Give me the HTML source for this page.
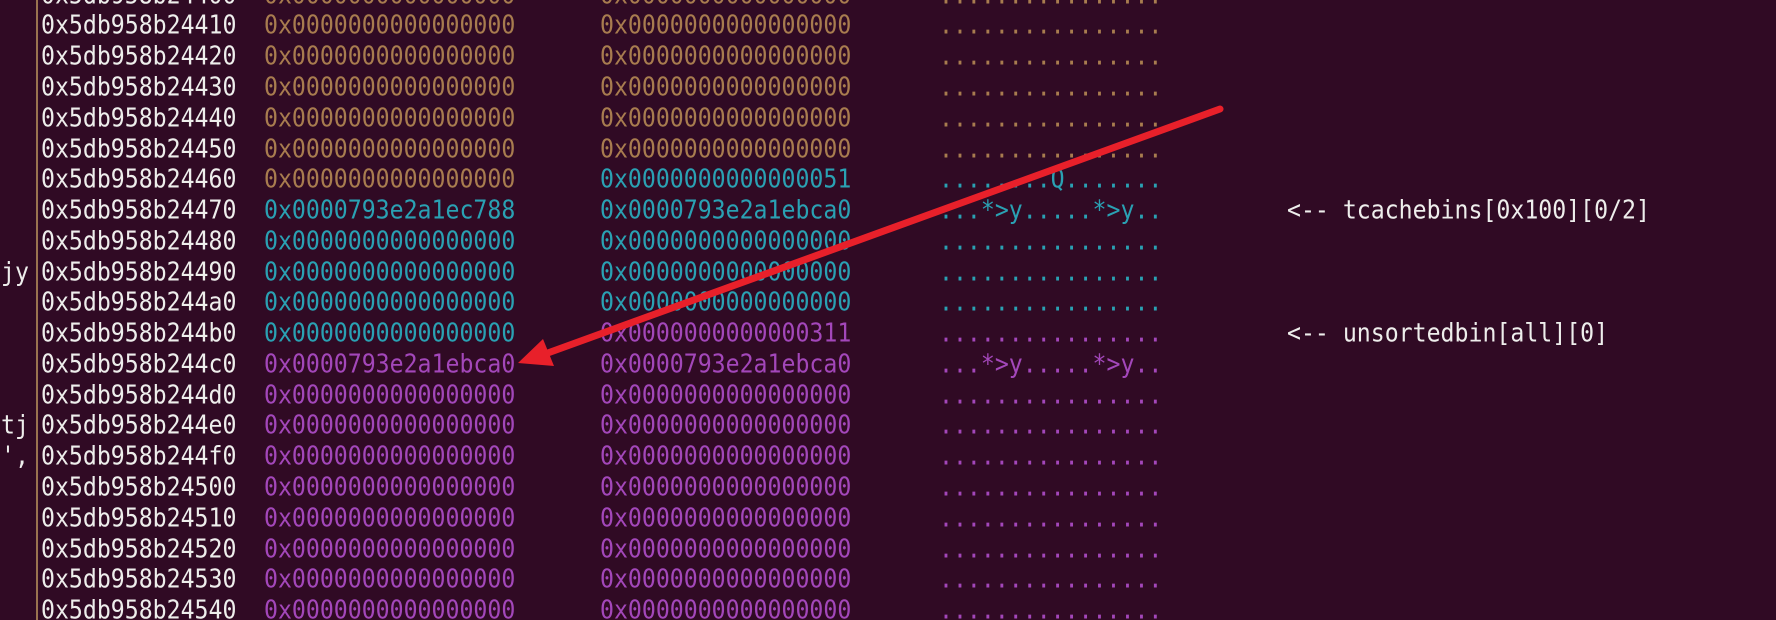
<!DOCTYPE html>
<html><head><meta charset="utf-8"><style>
html,body{margin:0;padding:0;width:1776px;height:620px;overflow:hidden;background:#300a24;}
body{position:relative;font-family:"DejaVu Sans Mono","Liberation Mono",monospace;font-size:23.2px;}
.r{position:absolute;left:0;height:30.8px;line-height:30.8px;white-space:pre;}
.r span{position:absolute;top:0;transform:scaleY(1.1);transform-origin:50% 50%;}
.w{color:#eeeeec}.o{color:#a87c4f}.c{color:#2aa1b3}.m{color:#a347ba}
.vl{position:absolute;left:36px;top:0;width:2px;height:620px;background:#9a7350;}
</style></head><body>
<div class="vl"></div>
<div id="rows"></div>
<script>
var Z="0x0000000000000000",D="................";
var rows=[
["24400","o",Z,"o",Z,"o",D,""],
["24410","o",Z,"o",Z,"o",D,""],
["24420","o",Z,"o",Z,"o",D,""],
["24430","o",Z,"o",Z,"o",D,""],
["24440","o",Z,"o",Z,"o",D,""],
["24450","o",Z,"o",Z,"o",D,""],
["24460","o",Z,"c","0x0000000000000051","c","........Q.......",""],
["24470","c","0x0000793e2a1ec788","c","0x0000793e2a1ebca0","c","...*>y.....*>y..","<-- tcachebins[0x100][0/2]"],
["24480","c",Z,"c",Z,"c",D,""],
["24490","c",Z,"c",Z,"c",D,""],
["244a0","c",Z,"c",Z,"c",D,""],
["244b0","c",Z,"m","0x0000000000000311","m",D,"<-- unsortedbin[all][0]"],
["244c0","m","0x0000793e2a1ebca0","m","0x0000793e2a1ebca0","m","...*>y.....*>y..",""],
["244d0","m",Z,"m",Z,"m",D,""],
["244e0","m",Z,"m",Z,"m",D,""],
["244f0","m",Z,"m",Z,"m",D,""],
["24500","m",Z,"m",Z,"m",D,""],
["24510","m",Z,"m",Z,"m",D,""],
["24520","m",Z,"m",Z,"m",D,""],
["24530","m",Z,"m",Z,"m",D,""],
["24540","m",Z,"m",Z,"m",D,""]];
var left={9:"jy",14:"tj",15:"',"};
var h="";
rows.forEach(function(r,i){
var t=-19.3+30.77*i;
h+='<div class="r" style="top:'+t+'px">'+(left[i]?'<span class="w" style="left:1px">'+left[i]+'</span>':'')+'<span class="w" style="left:41px">0x5db958b'+r[0]+'</span>'+
'<span class="'+r[1]+'" style="left:264px">'+r[2]+'</span>'+
'<span class="'+r[3]+'" style="left:600px">'+r[4]+'</span>'+
'<span class="'+r[5]+'" style="left:939px">'+r[6]+'</span>'+
(r[7]?'<span class="w" style="left:1287px">'+r[7]+'</span>':'')+'</div>';
});
document.getElementById("rows").innerHTML=h;
</script>
<svg style="position:absolute;left:0;top:0" width="1776" height="620">
<line x1="1220" y1="109" x2="545" y2="354" stroke="#e8202a" stroke-width="7" stroke-linecap="round"/>
<polygon points="518,363 543,339 554,366" fill="#e8202a"/>
</svg>
</body></html>
